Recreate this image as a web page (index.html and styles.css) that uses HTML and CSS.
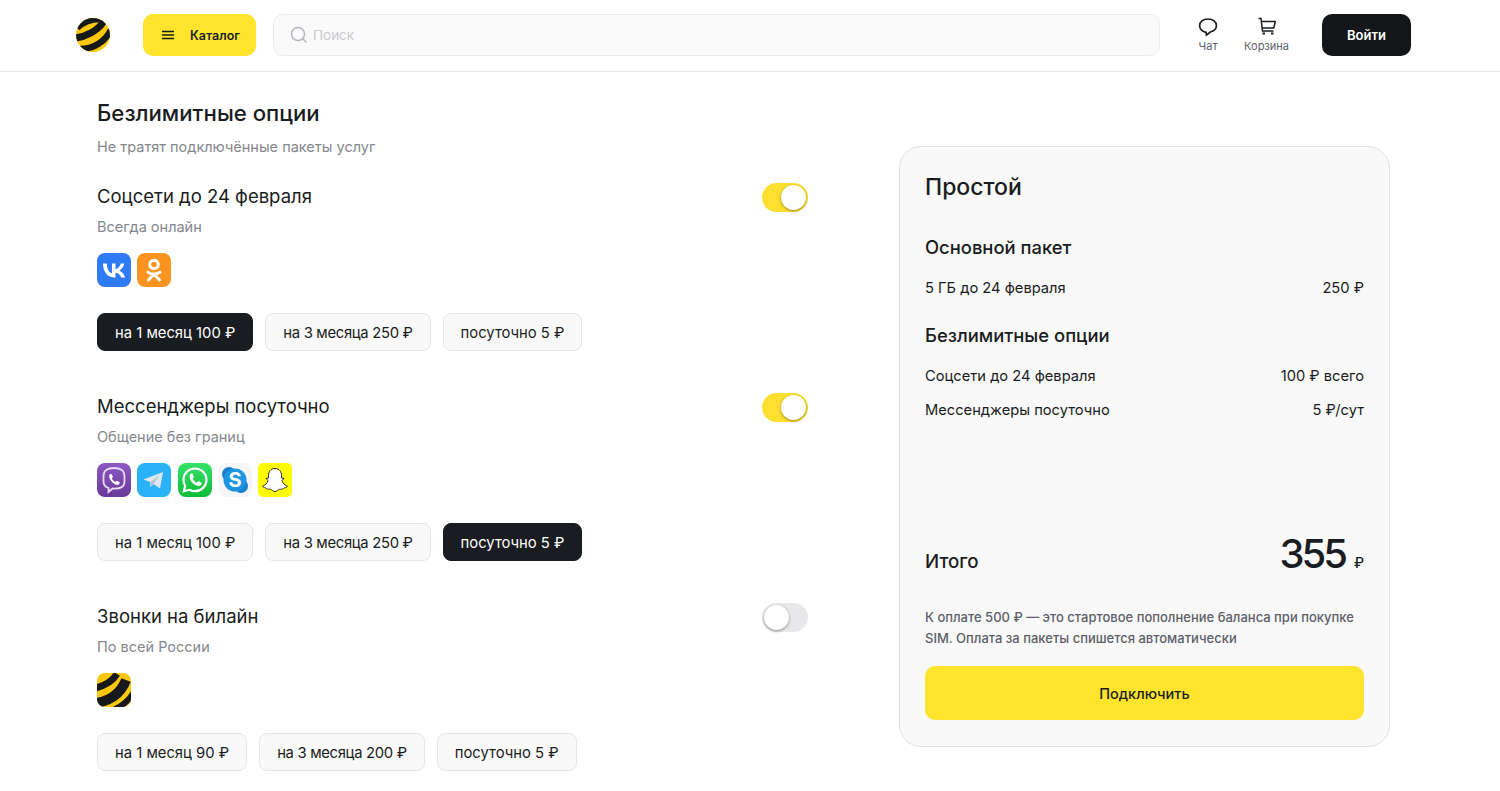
FILE: index.html
```html
<!DOCTYPE html>
<html lang="ru">
<head>
<meta charset="UTF-8">
<title>Простой</title>
<link rel="stylesheet" href="styles.css">
</head>
<body>

<header class="top">
  <svg class="logo" width="36" height="36" viewBox="0 0 36 36">
    <defs><clipPath id="ball"><circle cx="18" cy="18" r="17"/></clipPath></defs>
    <g clip-path="url(#ball)" fill="none" stroke="#17181a">
      <rect width="36" height="36" fill="#fdc80c" stroke="none"/>
      <path d="M2 11C8 5 15 2 25 2" stroke-width="6.500"/>
      <path d="M0 21C10 20 23 14 29 4" stroke-width="7"/>
      <path d="M5 32C18 32 30 25 36 13" stroke-width="6.500"/>
    </g>
  </svg>
  <button class="catalog">
    <svg width="14" height="10" viewBox="0 0 14 10"><path d="M1 1.500H13M1 5H13M1 8.500H13" stroke="#191c20" stroke-width="1.600"/></svg>
    <span>Каталог</span>
  </button>
  <div class="search">
    <svg width="18" height="18" viewBox="0 0 18 18" fill="none" stroke="#b5b7c0" stroke-width="1.500"><circle cx="8" cy="8" r="6.500"/><path d="M12.800 12.800L16.500 16.500"/></svg>
    <span>Поиск</span>
  </div>
  <a class="top-link chat">
    <svg width="20" height="20" viewBox="0 0 20 20" fill="none" stroke="#191c20" stroke-width="1.700"><path d="M10 2C5 2 1.600 4.800 1.600 8.700C1.600 12.200 4.500 14.900 8 15.300L8.500 18L12.300 15C16 14.200 18.400 11.800 18.400 8.500C18.400 4.700 15 2 10 2Z"/></svg>
    <span>Чат</span>
  </a>
  <a class="top-link cart">
    <svg width="20" height="20" viewBox="0 0 20 20" fill="none" stroke="#191c20" stroke-width="1.500"><path d="M1.500 1.500H4L5.500 14H16.500"/><path d="M4.300 4.500H18.300L16.800 11H5.200"/><path d="M5.500 16.500H8M14 16.500H16.500" stroke-width="2"/></svg>
    <span>Корзина</span>
  </a>
  <button class="login">Войти</button>
</header>

<main class="page">
  <section class="options">
    <h1>Безлимитные опции</h1>
    <p class="lead">Не тратят подключённые пакеты услуг</p>

    <div class="option">
      <div class="option-head">
        <h2>Соцсети до 24 февраля</h2>
        <span class="toggle on"></span>
      </div>
      <p class="note">Всегда онлайн</p>
      <div class="apps">
        <svg class="app" viewBox="0 0 34 34"><rect width="34" height="34" rx="8" fill="#2f7bf6"/><path d="M18 24.500C10.500 24.500 6.200 19.300 6 10.500H9.800C9.900 17 12.700 19.700 15 20.300V10.500H18.500V16.100C20.700 15.900 23 13.300 23.800 10.500H27.300C26.700 14 24.100 16.600 22.300 17.600C24.100 18.500 27 20.700 28.100 24.500H24.200C23.400 22 21.300 20 18.500 19.800V24.500Z" fill="#fff"/></svg>
        <svg class="app" viewBox="0 0 34 34"><rect width="34" height="34" rx="8" fill="#fb9420"/><g fill="none" stroke="#fff" stroke-width="3" stroke-linecap="round"><circle cx="17" cy="11.500" r="4.300"/><path d="M11 19.300C14.500 21.500 19.500 21.500 23 19.300M17 21L11.500 27M17 21L22.500 27"/></g></svg>
      </div>
      <div class="plans">
        <button class="plan active">на 1 месяц 100 ₽</button>
        <button class="plan long">на 3 месяца 250 ₽</button>
        <button class="plan">посуточно 5 ₽</button>
      </div>
    </div>

    <div class="option">
      <div class="option-head">
        <h2>Мессенджеры посуточно</h2>
        <span class="toggle on"></span>
      </div>
      <p class="note">Общение без границ</p>
      <div class="apps">
        <svg class="app" viewBox="0 0 34 34"><defs><linearGradient id="vb" x1="0" y1="0" x2="0" y2="1"><stop offset="0" stop-color="#8d58c4"/><stop offset="1" stop-color="#69399a"/></linearGradient></defs><rect width="34" height="34" rx="8" fill="url(#vb)"/><path d="M17 5C11 5 6.500 6.500 6.500 14V18C6.500 22 8.500 24 11.500 25V29L15.500 25.500C23 26 27.500 24.500 27.500 18V14C27.500 6.500 23 5 17 5Z" fill="none" stroke="#e9dcf5" stroke-width="1.800"/><path d="M12.500 11.500L14.500 10.800L16 14L14.800 15.300C15.500 17 16.800 18.300 18.500 19L19.800 17.800L22.800 19.300L22.200 21.200C20.500 22.500 18 21.800 15.500 19.500C13 17 11.500 14 12.500 11.500Z" fill="#fff"/></svg>
        <svg class="app" viewBox="0 0 34 34"><rect width="34" height="34" rx="8" fill="#29b2f5"/><path d="M6.500 16.500L26 9L23 25.500L16.500 21L13.500 24L13 19Z" fill="#dfe7ee"/><path d="M13 19L23 12L16.500 21L13.500 24Z" fill="#b5c7d5"/></svg>
        <svg class="app" viewBox="0 0 34 34"><defs><linearGradient id="wa" x1="0" y1="0" x2="0" y2="1"><stop offset="0" stop-color="#35e36a"/><stop offset="1" stop-color="#0dbb38"/></linearGradient></defs><rect width="34" height="34" rx="8" fill="url(#wa)"/><path d="M17 5.500C10.500 5.500 5.500 10.500 5.500 16.800C5.500 19 6.100 21 7.200 22.800L5.800 28.200L11.300 26.800C13 27.700 15 28.200 17 28.200C23.300 28.200 28.500 23.100 28.500 16.800C28.500 10.500 23.300 5.500 17 5.500Z" fill="none" stroke="#fff" stroke-width="2.200"/><path d="M12.500 10.800L14.500 10.500L16 14L14.700 15.600C15.500 17.500 17 18.900 18.800 19.700L20.400 18.100L23.800 19.700L23.400 21.800C21.500 23.800 18 23 15 20.400C12 17.700 10.500 13.500 12.500 10.800Z" fill="#fff"/></svg>
        <svg class="app" viewBox="0 0 34 34"><rect width="34" height="34" rx="8" fill="#f5f6f7"/><circle cx="11" cy="11" r="7" fill="#1b7fcc"/><circle cx="23" cy="23" r="7" fill="#1b7fcc"/><circle cx="17" cy="17" r="11.500" fill="#1c96e0"/><text x="17" y="24" class="skype">S</text></svg>
        <svg class="app" viewBox="0 0 34 34"><rect width="34" height="34" rx="5" fill="#fffc00"/><path d="M17 5.500C12.500 5.500 10.500 9 10.500 12.500V15L8 15.500L10 17.500C9.500 20 7.500 22 4.500 23.300C5.500 24.800 7.500 24.500 8.500 25.500C9.500 26.500 11 26 12.500 26.300C14 26.800 15 28.500 17 28.500C19 28.500 20 26.800 21.500 26.300C23 26 24.500 26.500 25.500 25.500C26.500 24.500 28.500 24.800 29.500 23.300C26.500 22 24.500 20 24 17.500L26 15.500L23.500 15V12.500C23.500 9 21.500 5.500 17 5.500Z" fill="#fff" stroke="#2a2a2a" stroke-width="1"/></svg>
      </div>
      <div class="plans">
        <button class="plan">на 1 месяц 100 ₽</button>
        <button class="plan long">на 3 месяца 250 ₽</button>
        <button class="plan active">посуточно 5 ₽</button>
      </div>
    </div>

    <div class="option">
      <div class="option-head">
        <h2>Звонки на билайн</h2>
        <span class="toggle"></span>
      </div>
      <p class="note">По всей России</p>
      <div class="apps">
        <svg class="app" viewBox="0 0 34 34"><defs><clipPath id="sq"><rect width="34" height="34" rx="8"/></clipPath></defs><g clip-path="url(#sq)" fill="none" stroke="#17181a"><rect width="34" height="34" fill="#fdc80c" stroke="none"/><path d="M-2 15C7 13 15 9 20 1" stroke-width="7"/><path d="M-2 30C11 29 24 21 29 7" stroke-width="10"/><path d="M14 38C24 34 32 28 37 19" stroke-width="6"/></g></svg>
      </div>
      <div class="plans">
        <button class="plan">на 1 месяц 90 ₽</button>
        <button class="plan long">на 3 месяца 200 ₽</button>
        <button class="plan">посуточно 5 ₽</button>
      </div>
    </div>
  </section>

  <aside class="summary">
    <h2 class="tariff">Простой</h2>
    <h3>Основной пакет</h3>
    <div class="row"><span>5 ГБ до 24 февраля</span><span>250 ₽</span></div>
    <h3 class="second">Безлимитные опции</h3>
    <div class="row"><span>Соцсети до 24 февраля</span><span>100 ₽ всего</span></div>
    <div class="row"><span>Мессенджеры посуточно</span><span>5 ₽/сут</span></div>
    <div class="total">
      <span class="total-label">Итого</span>
      <span class="total-sum">355<small>₽</small></span>
    </div>
    <p class="hint">К оплате 500 ₽ — это стартовое пополнение баланса при покупке SIM. Оплата за пакеты спишется автоматически</p>
    <button class="connect">Подключить</button>
  </aside>
</main>

</body>
</html>
```
FILE: styles.css
```css
* { box-sizing: border-box; }
body { margin: 0; background: #fff; color: #191c20; font-family: Inter, "Noto Sans", sans-serif; }
button { font-family: inherit; border: 0; cursor: pointer; }
h1, h2, h3, p { margin: 0; }

.top { display: flex; align-items: center; height: 72px; padding: 0 89px 1px 75px; border-bottom: 1px solid #e6e6e6; }
.logo { flex: none; margin-right: 32px; }
.catalog { display: flex; align-items: center; gap: 15px; width: 113px; height: 42px; padding-left: 18px; border-radius: 10px; background: #ffe42e; color: #191c20; font-size: 12.500px; font-weight: 600; }
.search { flex: 1; display: flex; align-items: center; gap: 5px; height: 42px; margin-left: 17px; padding-left: 16px; border: 1px solid #ececec; border-radius: 10px; background: #fafafa; color: #c9cad0; font-size: 13.500px; }
.top-link { display: flex; flex-direction: column; align-items: center; gap: 2px; color: #5d6068; font-size: 11px; }
.chat { margin-left: 38px; }
.cart { margin-left: 26px; }
.login { width: 89px; height: 42px; margin-left: 33px; border-radius: 10px; background: #14171a; color: #fff; font-size: 13px; font-weight: 600; }

.page { display: flex; align-items: flex-start; padding: 0 110px 20px 97px; }
.options { width: 711px; padding-top: 28px; }
h1 { font-size: 22.200px; font-weight: 500; line-height: 26px; }
.lead { margin-top: 12px; color: #84878d; font-size: 14.500px; line-height: 18px; }

.option { margin-bottom: 41px; }
.option:last-child { margin-bottom: 0; }
.lead + .option { margin-top: 26px; }
.option-head { display: flex; justify-content: space-between; height: 30px; padding-top: 1px; }
.option-head h2 { font-size: 18.500px; font-weight: 400; line-height: 26px; }
.note { margin-top: 6px; color: #84878d; font-size: 14.500px; line-height: 18px; }
.apps { display: flex; gap: 6.250px; margin-top: 17px; }
.app { width: 34px; height: 34px; }
.skype { fill: #fff; font-size: 20px; font-weight: 700; text-anchor: middle; }
.plans { display: flex; gap: 12px; margin-top: 26px; }
.plan { height: 38px; padding: 1px 17px 0; border: 1px solid #e6e6e6; border-radius: 8px; background: #f9f9f9; color: #191c20; font-size: 14.800px; }
.plan.long { letter-spacing: -.3px; }
.plan.active { border-color: #191c20; background: #191c20; color: #fff; }

.toggle { position: relative; display: block; width: 46px; height: 29px; border-radius: 15px; background: #e8e8ea; }
.toggle::after { content: ""; position: absolute; top: 2px; left: 2px; width: 25px; height: 25px; border-radius: 50%; background: #fff; box-shadow: 0 1px 3px rgba(0, 0, 0, .4); }
.toggle.on { background: #fde02f; }
.toggle.on::after { left: 19px; }

.summary { display: flex; flex-direction: column; width: 491px; height: 601px; margin: 74px 0 0 91px; padding: 25px 25px 26px; border: 1px solid #e2e2e2; border-radius: 22px; background: #f9f9f9; }
.tariff { font-size: 23px; font-weight: 500; line-height: 30px; }
h3 { margin-top: 33px; font-size: 18.400px; font-weight: 500; line-height: 24px; }
h3.second { margin-top: 26px; }
.row { display: flex; justify-content: space-between; margin-top: 20px; font-size: 14.700px; line-height: 18px; }
.row + .row { margin-top: 16px; }
.total { display: flex; justify-content: space-between; align-items: flex-end; margin-top: auto; }
.total-label { margin-bottom: 8px; font-size: 18.700px; font-weight: 500; line-height: 30px; }
.total-sum { font-size: 40px; font-weight: 500; line-height: 44px; letter-spacing: -3px; }
.total-sum small { margin-left: 9px; font-size: 14px; letter-spacing: 0; }
.hint { margin-top: 22px; color: #5d6068; font-size: 13px; font-weight: 500; line-height: 21px; }
.connect { height: 54px; margin-top: 17px; border-radius: 10px; background: #ffe42e; color: #191c20; font-size: 14.500px; font-weight: 500; }
```
